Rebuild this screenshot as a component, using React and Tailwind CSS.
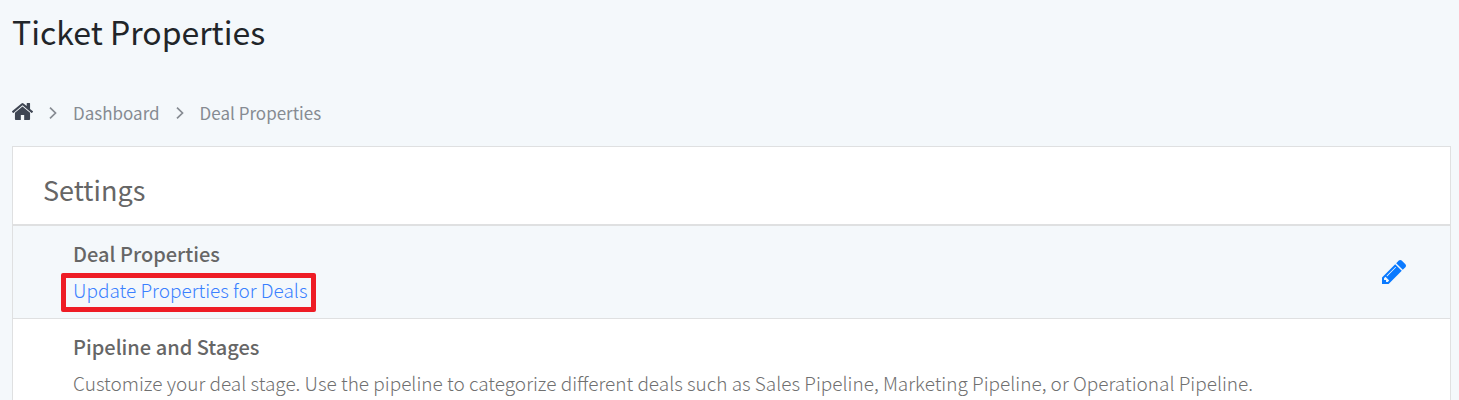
import React from "react";

const rows = [
  {
    title: "Deal Properties",
    text: "Update Properties for Deals",
    link: true,
    marked: true,
  },
  {
    title: "Pipeline and Stages",
    text: "Customize your deal stage. Use the pipeline to categorize different deals such as Sales Pipeline, Marketing Pipeline, or Operational Pipeline.",
  },
];

const HomeIcon = () => (
  <svg viewBox="96 253 1600 1283" className="h-[17px] w-[21px] fill-[#3f4653]" aria-hidden="true">
    <path d="M1472 992v480q0 26-19 45t-45 19h-384v-384h-256v384h-384q-26 0-45-19t-19-45v-480q0-1 .5-3t.5-3l575-474 575 474q1 2 1 6zm223-69l-62 74q-8 9-21 11h-3q-13 0-21-7l-692-577-692 577q-12 8-24 7-13-2-21-11l-62-74q-8-10-7-23.5t11-21.5l719-599q32-26 76-26t76 26l244 204v-195q0-14 9-23t23-9h192q14 0 23 9t9 23v408l219 182q10 8 11 21.5t-7 23.5z" />
  </svg>
);

const PencilIcon = () => (
  <svg viewBox="128 149 1515 1515" className="h-6 w-6 fill-[#0a7aff]" aria-hidden="true">
    <path d="M491 1536l91-91-235-235-91 91v107h128v128h107zm523-928q0-22-22-22-10 0-17 7l-542 542q-7 7-7 17 0 22 22 22 10 0 17-7l542-542q7-7 7-17zm-54-192l416 416-832 832h-416v-416zm683 96q0 53-37 90l-166 166-416-416 166-165q36-38 90-38 53 0 91 38l235 234q37 39 37 91z" />
  </svg>
);

const Chevron = () => (
  <svg viewBox="0 0 8 12" className="h-3 w-2 fill-none stroke-[#868b92]" aria-hidden="true">
    <path d="M1 0.7l5.5 5.3L1 11.3" strokeWidth="1.7" />
  </svg>
);

const App = () => {
  return (
    <div className="h-screen overflow-hidden bg-[#f4f8fb] pl-3 pr-2 font-['Noto_Sans_CJK_SC',sans-serif]">
      <h1 className="pt-3 text-[32px] leading-[38px] text-[#212529]">Ticket Properties</h1>

      <nav aria-label="Breadcrumb" className="pt-[50px] pb-5">
        <ol className="flex items-center gap-4 text-[17px] leading-[26px] text-[#868b92]">
          <li>
            <a href="#home" aria-label="Home" className="block pb-1">
              <HomeIcon />
            </a>
          </li>
          <li><Chevron /></li>
          <li>
            <a href="#dashboard">Dashboard</a>
          </li>
          <li><Chevron /></li>
          <li>Deal Properties</li>
        </ol>
      </nav>

      <section className="border border-[#dfe0e1] bg-white">
        <h2 className="border-b-2 border-[#dfe0e1] px-[30px] pt-5 pb-3 text-[27px] leading-[45px] text-[#666]">
          Settings
        </h2>

        {rows.map((row) => (
          <div
            key={row.title}
            className="flex items-center justify-between border-b border-[#dfe0e1] py-[10px] pr-11 pl-[60px] text-[#666] first-of-type:bg-[#f4f8fb]"
          >
            <div>
              <h3 className="text-[20px] leading-9 font-medium">{row.title}</h3>
              <div className="relative w-fit text-[19px] leading-9 font-light">
                {row.link ? (
                  <a href="#properties" className="text-[#3a80ff]">{row.text}</a>
                ) : (
                  <p className="text-[#707070]">{row.text}</p>
                )}
                {row.marked && (
                  <span className="pointer-events-none absolute top-px -right-2 -bottom-1 -left-3 rounded-xs border-5 border-[#ee1c25]" />
                )}
              </div>
            </div>
            {row.link && (
              <button type="button" aria-label="Edit deal properties">
                <PencilIcon />
              </button>
            )}
          </div>
        ))}
      </section>
    </div>
  );
};

export default App;
